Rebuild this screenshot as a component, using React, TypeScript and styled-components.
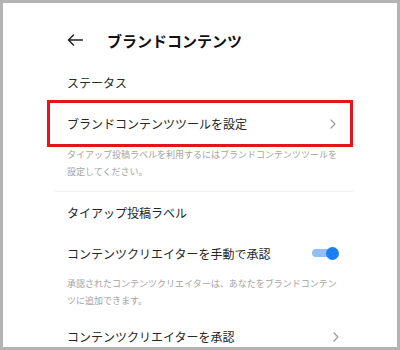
import React from "react";
import styled, { createGlobalStyle } from "styled-components";

const Global = createGlobalStyle`
  html, body { margin: 0; padding: 0; background: #fff; }
  body { font-family: "Noto Sans CJK JP", "Noto Sans", sans-serif; }
`;

const Frame = styled.div`
  box-sizing: border-box;
  width: 400px;
  height: 350px;
  border: 3px solid #b3b3b3;
  background: #fff;
  overflow: hidden;
`;

const Column = styled.div`
  display: flex;
  flex-direction: column;
  padding: 0 44px;
`;

const Header = styled.div`
  display: flex;
  align-items: center;
  height: 40px;
  margin-top: 17px;
  padding-left: 20px;
  gap: 24px;
`;

const Title = styled.div`
  font-size: 15px;
  font-weight: 700;
  color: #111;
  line-height: 1;
`;

const SectionLabel = styled.div`
  display: flex;
  align-items: center;
  height: 40px;
  padding: 4px 0 0 20px;
  box-sizing: border-box;
  font-size: 12px;
  color: #2a2a2a;
`;

const Row = styled.div<{ $h: number; $highlight?: boolean }>`
  display: flex;
  align-items: center;
  justify-content: space-between;
  box-sizing: border-box;
  height: ${(p) => p.$h}px;
  padding: ${(p) => (p.$highlight ? "0 14px 0 17px" : "0 14px 0 20px")};
  border: ${(p) => (p.$highlight ? "3px solid #e5141c" : "none")};
  font-size: 12px;
  color: #262626;
`;

const Description = styled.div<{ $mt: number }>`
  margin-top: ${(p) => p.$mt}px;
  padding: 0 14px 0 20px;
  font-size: 9px;
  line-height: 17px;
  color: #a3a3a3;
`;

const Divider = styled.div`
  height: 1px;
  background: #efefef;
  margin: 11px 0 0 8px;
`;

const Track = styled.div`
  position: relative;
  width: 26px;
  height: 8px;
  border-radius: 4px;
  background: #92bff5;
  margin-right: 1px;
`;

const Thumb = styled.div`
  position: absolute;
  right: -1px;
  top: 50%;
  width: 13px;
  height: 13px;
  margin-top: -6.5px;
  border-radius: 50%;
  background: #1c7ff0;
`;

const BackArrow = () => (
  <svg width="16" height="12" viewBox="0 0 16 12" fill="none">
    <path d="M15.5 6H1.5M6.5 1L1.5 6L6.5 11" stroke="#222" strokeWidth="1.5" strokeLinecap="round" strokeLinejoin="round" />
  </svg>
);

const Chevron = () => (
  <svg width="6" height="10" viewBox="0 0 6 10" fill="none">
    <path d="M1 1L5 5L1 9" stroke="#9a9a9a" strokeWidth="1.2" strokeLinecap="round" strokeLinejoin="round" />
  </svg>
);

export default function App() {
  return (
    <>
      <Global />
      <Frame>
        <Column>
          <Header>
            <BackArrow />
            <Title>ブランドコンテンツ</Title>
          </Header>
          <SectionLabel>ステータス</SectionLabel>
          <Row $h={47} $highlight>
            <span>ブランドコンテンツツールを設定</span>
            <Chevron />
          </Row>
          <Description $mt={-1}>
            タイアップ投稿ラベルを利用するにはブランドコンテンツツールを
            <br />
            設定してください。
          </Description>
          <Divider />
          <Row $h={40}>
            <span>タイアップ投稿ラベル</span>
          </Row>
          <Row $h={42}>
            <span>コンテンツクリエイターを手動で承認</span>
            <Track>
              <Thumb />
            </Track>
          </Row>
          <Description $mt={1}>
            承認されたコンテンツクリエイターは、あなたをブランドコンテン
            <br />
            ツに追加できます。
          </Description>
          <Row $h={55}>
            <span>コンテンツクリエイターを承認</span>
            <Chevron />
          </Row>
        </Column>
      </Frame>
    </>
  );
}
